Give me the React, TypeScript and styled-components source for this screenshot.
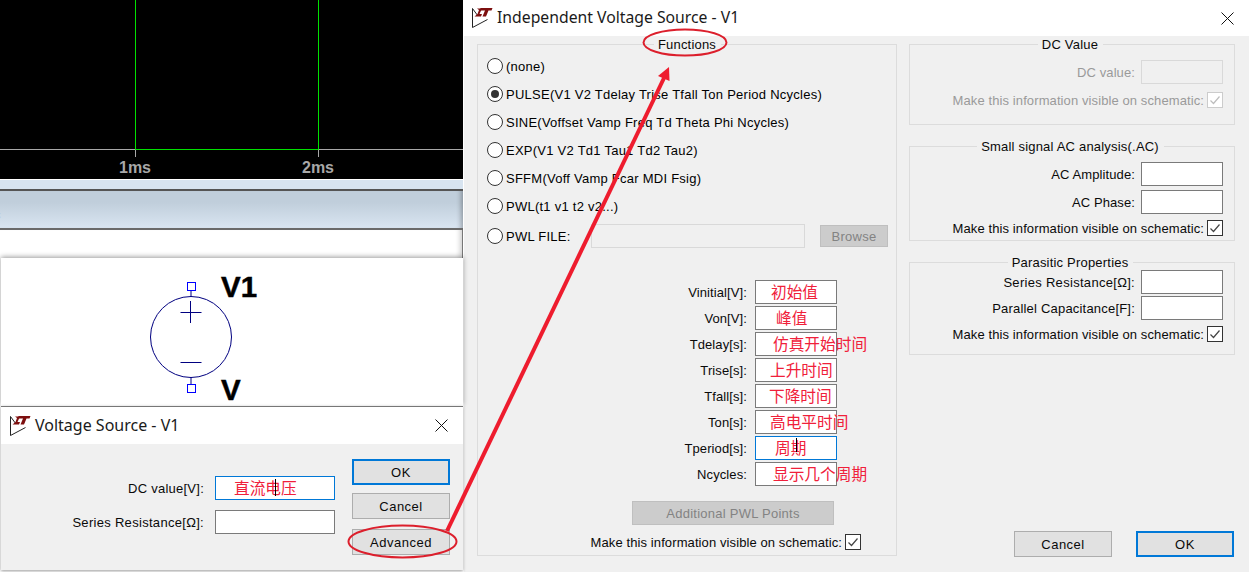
import React from 'react';
import styled, { createGlobalStyle } from 'styled-components';

const GlobalStyle = createGlobalStyle`
  html, body {
    margin: 0;
    padding: 0;
    background: #fff;
  }
  body {
    font-family: "Liberation Sans", Arial, sans-serif;
    font-size: 13px;
    color: #000;
    overflow: hidden;
  }
`;

const Screen = styled.div`
  position: relative;
  display: flex;
  width: 1249px;
  height: 572px;
  overflow: hidden;
`;

const LeftPane = styled.div`
  display: flex;
  flex-direction: column;
  width: 464px;
  flex: none;
`;

const PlotWrap = styled.div`
  width: 463px;
  height: 179px;
  background: #000;
  flex: none;
`;

const TopBand = styled.div`
  width: 463px;
  height: 9px;
  margin-top: 1px;
  background: #d8e4f0;
  border-bottom: 2px solid #555;
  flex: none;
`;

const TabBand = styled.div`
  display: flex;
  align-items: center;
  width: 463px;
  height: 37px;
  background: linear-gradient(#c0cedb 30%, #d9e5f1);
  border-bottom: 2px solid #6a6a6a;
  box-shadow: inset -6px 0 5px -4px rgba(0, 0, 0, 0.3);
  flex: none;
  overflow: hidden;
`;

const ClippedLabel = styled.span`
  margin: 9px 0 0 -6px;
  color: #999;
`;

const EditorGap = styled.div`
  width: 463px;
  height: 28px;
  background: #fff;
  border-right: 1px solid #777;
  box-sizing: border-box;
  box-shadow: inset -6px 0 5px -4px rgba(0, 0, 0, 0.2);
  flex: none;
`;

const SchematicPanel = styled.div`
  position: relative;
  width: 462px;
  height: 148px;
  margin-left: 1px;
  background: #fff;
  box-shadow: 0 -1px 5px rgba(0, 0, 0, 0.4);
  flex: none;
`;

const SymbolLabel = styled.span<{ $top: number }>`
  position: absolute;
  left: 220px;
  top: ${(p) => p.$top}px;
  font-size: 29.5px;
  line-height: 30px;
  font-weight: bold;
  color: #000;
  -webkit-text-stroke: 0.5px #000;
`;

const SmallDialog = styled.div`
  display: flex;
  flex-direction: column;
  position: relative;
  width: 462px;
  height: 163px;
  margin-left: 1px;
  background: #f0f0f0;
  border-top: 1px solid #777;
  box-shadow: 0 1px 3px rgba(0, 0, 0, 0.4);
  flex: none;
`;

const TitleBar = styled.div<{ $height: number; $left: number; $right: number }>`
  display: flex;
  align-items: center;
  height: ${(p) => p.$height}px;
  padding: 0 ${(p) => p.$right}px 0 ${(p) => p.$left}px;
  background: #fff;
  flex: none;
`;

const TitleText = styled.span<{ $size: number }>`
  flex: 1;
  margin: 0 0 2px 4px;
  font-family: "Noto Sans", "Open Sans", sans-serif;
  font-size: ${(p) => p.$size}px;
  color: #1a1a1a;
`;

const SmallBody = styled.div`
  display: flex;
  padding: 15px 13px 0 0;
`;

const SmallFields = styled.div`
  display: flex;
  flex-direction: column;
  flex: 1;
  padding-top: 17px;
  gap: 10px;
`;

const SmallRow = styled.div`
  display: flex;
  align-items: center;
  justify-content: flex-end;
  gap: 11px;
  padding-right: 17px;
`;

const ButtonStack = styled.div`
  display: flex;
  flex-direction: column;
  gap: 8px;
`;

const FieldLabel = styled.span<{ $disabled?: boolean; $track?: number }>`
  font-size: 13px;
  letter-spacing: ${(p) => p.$track ?? 0.1}px;
  white-space: nowrap;
  color: ${(p) => (p.$disabled ? '#9a9a9a' : '#0a0a0a')};
`;

const Field = styled.div<{ $width?: number; $focused?: boolean; $disabled?: boolean; $indent?: number }>`
  position: relative;
  display: flex;
  align-items: center;
  box-sizing: border-box;
  width: ${(p) => p.$width ?? 82}px;
  height: 24px;
  padding-left: ${(p) => p.$indent ?? 0}px;
  background: ${(p) => (p.$disabled ? '#f0f0f0' : '#fff')};
  border: 1px solid ${(p) => (p.$focused ? '#0078d7' : p.$disabled ? '#d9d9d9' : '#7a7a7a')};
  flex: none;
`;

const Caret = styled.span<{ $left: number; $top: number; $height: number }>`
  position: absolute;
  left: ${(p) => p.$left}px;
  top: ${(p) => p.$top}px;
  width: 1px;
  height: ${(p) => p.$height}px;
  background: #000;
`;

const Note = styled.span`
  font-family: "Noto Sans CJK SC", sans-serif;
  font-size: 15.7px;
  line-height: 20px;
  color: #f0203a;
  white-space: nowrap;
`;

const Button = styled.div<{ $primary?: boolean; $disabled?: boolean; $width?: number; $height?: number }>`
  display: flex;
  align-items: center;
  justify-content: center;
  box-sizing: border-box;
  width: ${(p) => p.$width ?? 98}px;
  height: ${(p) => p.$height ?? 26}px;
  font-size: 13px;
  letter-spacing: ${(p) => (p.$disabled ? 0.25 : 0.5)}px;
  background: ${(p) => (p.$disabled ? '#cccccc' : '#e1e1e1')};
  color: ${(p) => (p.$disabled ? '#838383' : '#0a0a0a')};
  border: ${(p) => (p.$primary ? '2px solid #0078d7' : `1px solid ${p.$disabled ? '#bfbfbf' : '#adadad'}`)};
  flex: none;
`;

const AdvancedButton = styled(Button)`
  margin-top: 2px;
`;

const BigDialog = styled.div`
  display: flex;
  flex-direction: column;
  flex: 1;
  height: 572px;
  background: #f0f0f0;
`;

const BigBody = styled.div`
  display: grid;
  grid-template-columns: 420px 326px;
  column-gap: 12px;
  padding: 0 0 0 13px;
`;

const Group = styled.fieldset<{ $height: number }>`
  display: flex;
  flex-direction: column;
  box-sizing: border-box;
  height: ${(p) => p.$height}px;
  margin: 0;
  padding: 0 8px 0 9px;
  border: 1px solid #dcdcdc;
  min-width: 0;
`;

const Legend = styled.legend`
  padding: 1px 5px 0 4px;
  margin: 0 auto;
  font-size: 13px;
  line-height: 15px;
  letter-spacing: 0.2px;
  color: #0a0a0a;
`;

const Column = styled.div`
  display: flex;
  flex-direction: column;
`;

const RadioList = styled.div`
  display: flex;
  flex-direction: column;
`;

const RadioRow = styled.div`
  display: flex;
  align-items: center;
  height: 28px;
  letter-spacing: 0.25px;
  white-space: nowrap;
`;

const RadioCircle = styled.span<{ $checked?: boolean }>`
  position: relative;
  box-sizing: border-box;
  width: 16px;
  height: 16px;
  margin-right: 3px;
  border: 1px solid #333;
  border-radius: 50%;
  background: #fff;
  flex: none;
  &::after {
    content: '';
    display: ${(p) => (p.$checked ? 'block' : 'none')};
    position: absolute;
    inset: 3px;
    border-radius: 50%;
    background: #333;
  }
`;

const FileRow = styled(RadioRow)`
  margin-top: 2px;
`;

const FileSpacer = styled.span`
  width: 214px;
  margin: 0 15px 0 auto;
  height: 24px;
  box-sizing: border-box;
  background: #f0f0f0;
  border: 1px solid #d9d9d9;
`;

const PulseFields = styled.div`
  display: flex;
  flex-direction: column;
  gap: 2px;
  margin: 30px 0 0;
  padding-right: 51px;
`;

const FormRow = styled.div`
  display: flex;
  align-items: center;
  justify-content: flex-end;
  gap: 8px;
`;

const CheckRow = styled.div<{ $offset?: number; $top?: number }>`
  display: flex;
  align-items: center;
  justify-content: flex-end;
  gap: 3px;
  height: 16px;
  margin-top: ${(p) => p.$top ?? 0}px;
  padding-right: ${(p) => p.$offset ?? 0}px;
`;

const Check = styled.span<{ $disabled?: boolean }>`
  display: flex;
  box-sizing: border-box;
  width: 16px;
  height: 16px;
  background: #fff;
  border: 1px solid ${(p) => (p.$disabled ? '#cccccc' : '#333')};
  color: ${(p) => (p.$disabled ? '#bdbdbd' : '#444')};
  flex: none;
`;

const CenterRow = styled.div`
  display: flex;
  justify-content: flex-end;
  margin-top: 15px;
  padding-right: 54px;
`;

const SideRow = styled(FormRow)<{ $top?: number }>`
  gap: 6px;
  margin-top: ${(p) => p.$top ?? 0}px;
`;

const SideGroup = styled(Group)`
  padding: 0 11px 0 8px;
  margin-bottom: 13px;
`;

const SideFooter = styled.div`
  display: flex;
  justify-content: flex-end;
  gap: 24px;
  margin-top: 163px;
  padding-right: 1px;
`;

const Overlay = styled.svg`
  position: absolute;
  inset: 0;
  width: 1249px;
  height: 572px;
  pointer-events: none;
`;

function LtLogo() {
  return (
    <svg width="22" height="22" viewBox="0 0 22 22" style={{ flex: 'none' }}>
      <path d="M1.5 1.5 L1.5 20.5 L16.5 12.5 M1.5 1.5 L7 9" fill="none" stroke="#222" strokeWidth="1" />
      <path d="M6 1.5 H11 L8.5 7 H11 L10 9.5 H3.5 L6.5 7 L8 3 Z" fill="#7d0f0f" />
      <path d="M9.5 1 H21.5 L20.5 3.5 H17.5 L15 9.5 H11.5 L14 3.5 H9 Z" fill="#7d0f0f" />
    </svg>
  );
}

function CloseIcon() {
  return (
    <svg width="13" height="13" viewBox="0 0 13 13" style={{ flex: 'none' }}>
      <path d="M0.5 0.5 L12.5 12.5 M12.5 0.5 L0.5 12.5" stroke="#111" strokeWidth="1" fill="none" />
    </svg>
  );
}

function CheckMark() {
  return (
    <svg width="14" height="14" viewBox="0 0 14 14">
      <path d="M2.5 7.5 L5.5 10.5 L11.5 3.5" stroke="currentColor" strokeWidth="1.2" fill="none" />
    </svg>
  );
}

function Plot() {
  return (
    <svg width="463" height="179" viewBox="0 0 463 179" style={{ display: 'block' }}>
      <path d="M0 149.5 H463" stroke="#a8a8a8" strokeWidth="1" />
      <path d="M135.5 149.5 V157 M318.5 149.5 V157" stroke="#a8a8a8" strokeWidth="1" />
      <path d="M135.5 0 V149.5 H318.5 V0" stroke="#00e000" strokeWidth="1" fill="none" />
      <text x="135" y="173" fill="#a8a8a8" fontFamily="Liberation Sans, sans-serif" fontWeight="bold" fontSize="16" textAnchor="middle">1ms</text>
      <text x="318" y="173" fill="#a8a8a8" fontFamily="Liberation Sans, sans-serif" fontWeight="bold" fontSize="16" textAnchor="middle">2ms</text>
    </svg>
  );
}

function SourceSymbol() {
  return (
    <svg width="100" height="148" viewBox="0 0 100 148" style={{ position: 'absolute', left: 139, top: 0 }}>
      <circle cx="51" cy="79" r="40.5" fill="none" stroke="#000080" strokeWidth="1" />
      <path d="M51 33 V39 M51 119 V126" stroke="#000080" strokeWidth="1" />
      <path d="M40.5 54.5 H61.5 M50.5 43 V65 M40.5 104.5 H61.5" stroke="#000080" strokeWidth="1" />
      <rect x="47.5" y="24.5" width="8" height="8" fill="none" stroke="#0000ff" strokeWidth="1" />
      <rect x="47.5" y="126.5" width="8" height="8" fill="none" stroke="#0000ff" strokeWidth="1" />
    </svg>
  );
}

const radios = [
  { label: '(none)' },
  { label: 'PULSE(V1 V2 Tdelay Trise Tfall Ton Period Ncycles)', checked: true },
  { label: 'SINE(Voffset Vamp Freq Td Theta Phi Ncycles)' },
  { label: 'EXP(V1 V2 Td1 Tau1 Td2 Tau2)' },
  { label: 'SFFM(Voff Vamp Fcar MDI Fsig)' },
  { label: 'PWL(t1 v1 t2 v2...)' },
];

const pulseFields = [
  { label: 'Vinitial[V]:', note: '初始值', indent: 15 },
  { label: 'Von[V]:', note: '峰值', indent: 20 },
  { label: 'Tdelay[s]:', note: '仿真开始时间', indent: 17 },
  { label: 'Trise[s]:', note: '上升时间', indent: 14 },
  { label: 'Tfall[s]:', note: '下降时间', indent: 13 },
  { label: 'Ton[s]:', note: '高电平时间', indent: 14 },
  { label: 'Tperiod[s]:', note: '周期', indent: 19, focused: true },
  { label: 'Ncycles:', note: '显示几个周期', indent: 17 },
];

function VisibleCheck({ disabled, top }: { disabled?: boolean; top?: number }) {
  return (
    <CheckRow $top={top}>
      <FieldLabel $disabled={disabled}>Make this information visible on schematic:</FieldLabel>
      <Check $disabled={disabled}>
        <CheckMark />
      </Check>
    </CheckRow>
  );
}

export default function App() {
  return (
    <Screen>
      <GlobalStyle />
      <LeftPane>
        <PlotWrap>
          <Plot />
        </PlotWrap>
        <TopBand />
        <TabBand>
          <ClippedLabel>c</ClippedLabel>
        </TabBand>
        <EditorGap />
        <SchematicPanel>
          <SourceSymbol />
          <SymbolLabel $top={14}>V1</SymbolLabel>
          <SymbolLabel $top={117}>V</SymbolLabel>
        </SchematicPanel>
        <SmallDialog>
          <TitleBar $height={37} $left={8} $right={15}>
            <LtLogo />
            <TitleText $size={16}>Voltage Source - V1</TitleText>
            <CloseIcon />
          </TitleBar>
          <SmallBody>
            <SmallFields>
              <SmallRow>
                <FieldLabel $track={0.25}>DC value[V]:</FieldLabel>
                <Field $width={120} $focused $indent={18}>
                  <Note>直流电压</Note>
                  <Caret $left={59} $top={2} $height={17} />
                </Field>
              </SmallRow>
              <SmallRow>
                <FieldLabel $track={0.3}>Series Resistance[Ω]:</FieldLabel>
                <Field $width={120} />
              </SmallRow>
            </SmallFields>
            <ButtonStack>
              <Button $primary>OK</Button>
              <Button>Cancel</Button>
              <AdvancedButton>Advanced</AdvancedButton>
            </ButtonStack>
          </SmallBody>
        </SmallDialog>
      </LeftPane>

      <BigDialog>
        <TitleBar $height={36} $left={7} $right={15}>
          <LtLogo />
          <TitleText $size={15.75}>Independent Voltage Source - V1</TitleText>
          <CloseIcon />
        </TitleBar>
        <BigBody>
          <Group $height={520}>
            <Legend>Functions</Legend>
            <RadioList>
              {radios.map((r) => (
                <RadioRow key={r.label}>
                  <RadioCircle $checked={r.checked} />
                  <span>{r.label}</span>
                </RadioRow>
              ))}
              <FileRow>
                <RadioCircle />
                <span>PWL FILE:</span>
                <FileSpacer />
                <Button $disabled $width={68} $height={22}>Browse</Button>
              </FileRow>
            </RadioList>
            <PulseFields>
              {pulseFields.map((f) => (
                <FormRow key={f.label}>
                  <FieldLabel>{f.label}</FieldLabel>
                  <Field $focused={f.focused} $indent={f.indent}>
                    <Note>{f.note}</Note>
                    {f.focused && <Caret $left={40} $top={1} $height={14} />}
                  </Field>
                </FormRow>
              ))}
            </PulseFields>
            <CenterRow>
              <Button $disabled $width={202} $height={24}>Additional PWL Points</Button>
            </CenterRow>
            <CheckRow $top={9} $offset={27}>
              <FieldLabel>Make this information visible on schematic:</FieldLabel>
              <Check>
                <CheckMark />
              </Check>
            </CheckRow>
          </Group>
          <Column>
            <SideGroup $height={89}>
              <Legend>DC Value</Legend>
              <SideRow $top={8}>
                <FieldLabel $disabled>DC value:</FieldLabel>
                <Field $disabled />
              </SideRow>
              <VisibleCheck disabled top={8} />
            </SideGroup>
            <SideGroup $height={103}>
              <Legend>Small signal AC analysis(.AC)</Legend>
              <SideRow $top={8}>
                <FieldLabel>AC Amplitude:</FieldLabel>
                <Field />
              </SideRow>
              <SideRow $top={4}>
                <FieldLabel>AC Phase:</FieldLabel>
                <Field />
              </SideRow>
              <VisibleCheck top={6} />
            </SideGroup>
            <SideGroup $height={101}>
              <Legend>Parasitic Properties</Legend>
              <SideRow>
                <FieldLabel $track={0.3}>Series Resistance[Ω]:</FieldLabel>
                <Field />
              </SideRow>
              <SideRow $top={2}>
                <FieldLabel $track={0.2}>Parallel Capacitance[F]:</FieldLabel>
                <Field />
              </SideRow>
              <VisibleCheck top={6} />
            </SideGroup>
            <SideFooter>
              <Button>Cancel</Button>
              <Button $primary>OK</Button>
            </SideFooter>
          </Column>
        </BigBody>
      </BigDialog>

      <Overlay viewBox="0 0 1249 572">
        <ellipse cx="685" cy="42.5" rx="41.5" ry="13" fill="none" stroke="#dc1f2c" strokeWidth="2" />
        <ellipse cx="402.5" cy="541.5" rx="54" ry="16" fill="none" stroke="#dc1f2c" strokeWidth="2" />
        <path d="M447 531 L664 78" stroke="#ee1c2e" strokeWidth="4" fill="none" />
        <path d="M669 67 L669.5 81 L658 76 Z" fill="#ee1c2e" />
      </Overlay>
    </Screen>
  );
}
